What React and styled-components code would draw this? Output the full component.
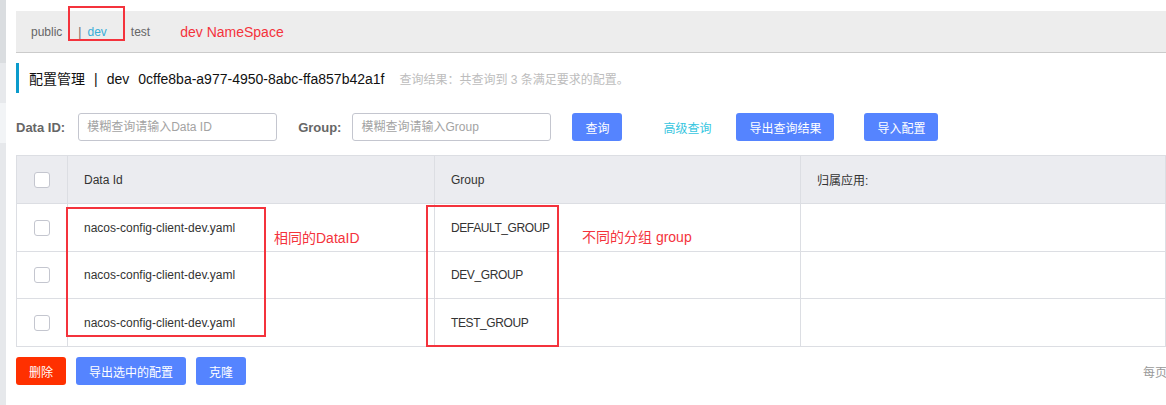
import React from "react";
import styled, { createGlobalStyle } from "styled-components";

const Global = createGlobalStyle`
  html, body { margin: 0; padding: 0; background: #fff; overflow: hidden; }
  body { font-family: "Liberation Sans", "Noto Sans CJK SC", sans-serif; }
  * { box-sizing: border-box; }
`;

const Page = styled.div`
  display: flex;
  width: 1166px;
  height: 405px;
  overflow: hidden;
`;

const Strip = styled.div`
  width: 6px;
  flex-shrink: 0;
  display: flex;
  flex-direction: column;
`;

const StripSeg = styled.div`
  height: ${(p) => (p.$h ? `${p.$h}px` : "auto")};
  flex: ${(p) => (p.$h ? "none" : 1)};
  background: ${(p) => p.$c};
`;

const Main = styled.div`
  flex: 1;
  margin-left: 10px;
  padding-top: 11px;
  min-width: 0;
  position: relative;
`;

const NavBar = styled.div`
  height: 42px;
  background: #ededed;
  border-bottom: 1px solid #cbcbcb;
  display: flex;
  align-items: center;
  padding-left: 15px;
  font-size: 12px;
  color: #666;
`;

const NavItem = styled.span`
  margin-right: ${(p) => p.$mr || 0}px;
  color: ${(p) => (p.$active ? "#3aaed8" : "#666")};
  line-height: 20px;
`;

const Sep = styled.span`
  color: #666;
  margin-right: 6px;
`;

const Note = styled.span`
  color: #f4333c;
  font-size: 14px;
`;

const HighlightBox = styled.div`
  position: absolute;
  border: 2px solid #f4333c;
  left: ${(p) => p.$x}px;
  top: ${(p) => p.$y}px;
  width: ${(p) => p.$w}px;
  height: ${(p) => p.$h}px;
  pointer-events: none;
`;

const FloatNote = styled(Note)`
  position: absolute;
  left: ${(p) => p.$x}px;
  top: ${(p) => p.$y}px;
  line-height: 18px;
  white-space: nowrap;
`;

const TitleRow = styled.div`
  margin-top: 10px;
  height: 30px;
  border-left: 3px solid #0a9bcc;
  padding-left: 10px;
  display: flex;
  align-items: center;
  white-space: nowrap;
`;

const Title = styled.span`
  font-size: 14px;
  color: #111;
`;

const TitleSep = styled.span`
  margin: 0 9px;
`;

const TitleId = styled.span`
  margin-left: 9px;
`;

const ResultHint = styled.span`
  font-size: 12px;
  color: #bdbdbd;
  margin-left: 15px;
`;

const SearchRow = styled.div`
  margin-top: 20px;
  height: 28px;
  display: flex;
  align-items: center;
  white-space: nowrap;
`;

const Label = styled.label`
  font-size: 13px;
  font-weight: bold;
  color: #666;
  margin-left: ${(p) => p.$ml || 0}px;
  margin-right: ${(p) => p.$mr || 0}px;
`;

const Input = styled.input`
  width: 199px;
  height: 28px;
  border: 1px solid #c4c6cf;
  border-radius: 3px;
  padding: 0 8px;
  font-family: inherit;
  font-size: 12px;
  color: #333;
  outline: none;
  &::placeholder { color: #a3a3a3; }
`;

const Button = styled.button`
  height: 28px;
  width: ${(p) => p.$w}px;
  margin-left: ${(p) => p.$ml || 0}px;
  border: none;
  border-radius: 3px;
  background: ${(p) => (p.$danger ? "#ff3000" : "#5584ff")};
  color: #fff;
  font-family: inherit;
  font-size: 12px;
  padding: 0;
  cursor: pointer;
`;

const LinkText = styled.span`
  margin-left: ${(p) => p.$ml}px;
  font-size: 12px;
  color: #36c6e0;
`;

const TableWrap = styled.div`
  margin-top: 14px;
  position: relative;
`;

const Table = styled.div`
  width: 1150px;
  border: 1px solid #dcdee3;
`;

const Row = styled.div`
  display: grid;
  grid-template-columns: 50px 367px 366px 1fr;
  height: ${(p) => p.$h}px;
  background: ${(p) => (p.$head ? "#ebecf0" : "#fff")};
  border-top: ${(p) => (p.$first ? "none" : "1px solid #dcdee3")};
`;

const Cell = styled.div`
  display: flex;
  align-items: center;
  justify-content: ${(p) => (p.$center ? "center" : "flex-start")};
  padding-left: ${(p) => (p.$center ? 0 : 16)}px;
  border-left: ${(p) => (p.$first ? "none" : "1px solid #dcdee3")};
  font-size: 12px;
  color: #333;
  white-space: nowrap;
  letter-spacing: ${(p) => (p.$tight ? "-0.4px" : "normal")};
`;

const Check = styled.span`
  width: 16px;
  height: 16px;
  border: 1px solid #c4c6cf;
  border-radius: 3px;
  background: #fff;
  margin-left: -1px;
`;

const Footer = styled.div`
  margin-top: 10px;
  margin-right: -200px;
  height: 28px;
  display: flex;
  align-items: center;
`;

const Pager = styled.span`
  margin-left: auto;
  margin-right: 163px;
  font-size: 12px;
  color: #999;
  white-space: nowrap;
`;

const rows = [
  { id: "nacos-config-client-dev.yaml", group: "DEFAULT_GROUP", h: 48 },
  { id: "nacos-config-client-dev.yaml", group: "DEV_GROUP", h: 47 },
  { id: "nacos-config-client-dev.yaml", group: "TEST_GROUP", h: 48 },
];

export default function App() {
  return (
    <>
      <Global />
      <Page>
        <Strip>
          <StripSeg $h={63} $c="#dadde0" />
          <StripSeg $h={40} $c="#e7e9ec" />
          <StripSeg $h={40} $c="#f2f4f6" />
          <StripSeg $c="#e6e8eb" />
        </Strip>
        <Main>
          <NavBar>
            <NavItem $mr={16}>public</NavItem>
            <NavItem $mr={24}>
              <Sep>|</Sep>
              <NavItem $active>dev</NavItem>
            </NavItem>
            <NavItem $mr={30}>test</NavItem>
            <Note>dev NameSpace</Note>
          </NavBar>
          <HighlightBox $x={52} $y={6} $w={57} $h={35} />

          <TitleRow>
            <Title>
              配置管理<TitleSep>|</TitleSep>dev<TitleId>0cffe8ba-a977-4950-8abc-ffa857b42a1f</TitleId>
            </Title>
            <ResultHint>查询结果：共查询到 3 条满足要求的配置。</ResultHint>
          </TitleRow>

          <SearchRow>
            <Label $mr={13}>Data ID:</Label>
            <Input placeholder="模糊查询请输入Data ID" />
            <Label $ml={21} $mr={11}>Group:</Label>
            <Input placeholder="模糊查询请输入Group" />
            <Button $w={50} $ml={21}>查询</Button>
            <LinkText $ml={41}>高级查询</LinkText>
            <Button $w={98} $ml={25}>导出查询结果</Button>
            <Button $w={74} $ml={30}>导入配置</Button>
          </SearchRow>

          <TableWrap>
            <Table>
              <Row $head $first $h={47}>
                <Cell $first $center><Check /></Cell>
                <Cell>Data Id</Cell>
                <Cell>Group</Cell>
                <Cell>归属应用:</Cell>
              </Row>
              {rows.map((r, i) => (
                <Row key={i} $h={r.h}>
                  <Cell $first $center><Check /></Cell>
                  <Cell>{r.id}</Cell>
                  <Cell $tight>{r.group}</Cell>
                  <Cell />
                </Row>
              ))}
            </Table>
            <HighlightBox $x={50} $y={52} $w={200} $h={130} />
            <FloatNote $x={258} $y={74}>相同的DataID</FloatNote>
            <HighlightBox $x={410} $y={50} $w={133} $h={142} />
            <FloatNote $x={566} $y={73}>不同的分组 group</FloatNote>
          </TableWrap>

          <Footer>
            <Button $danger $w={50}>删除</Button>
            <Button $w={110} $ml={10}>导出选中的配置</Button>
            <Button $w={50} $ml={10}>克隆</Button>
            <Pager>每页显示：</Pager>
          </Footer>
        </Main>
      </Page>
    </>
  );
}
